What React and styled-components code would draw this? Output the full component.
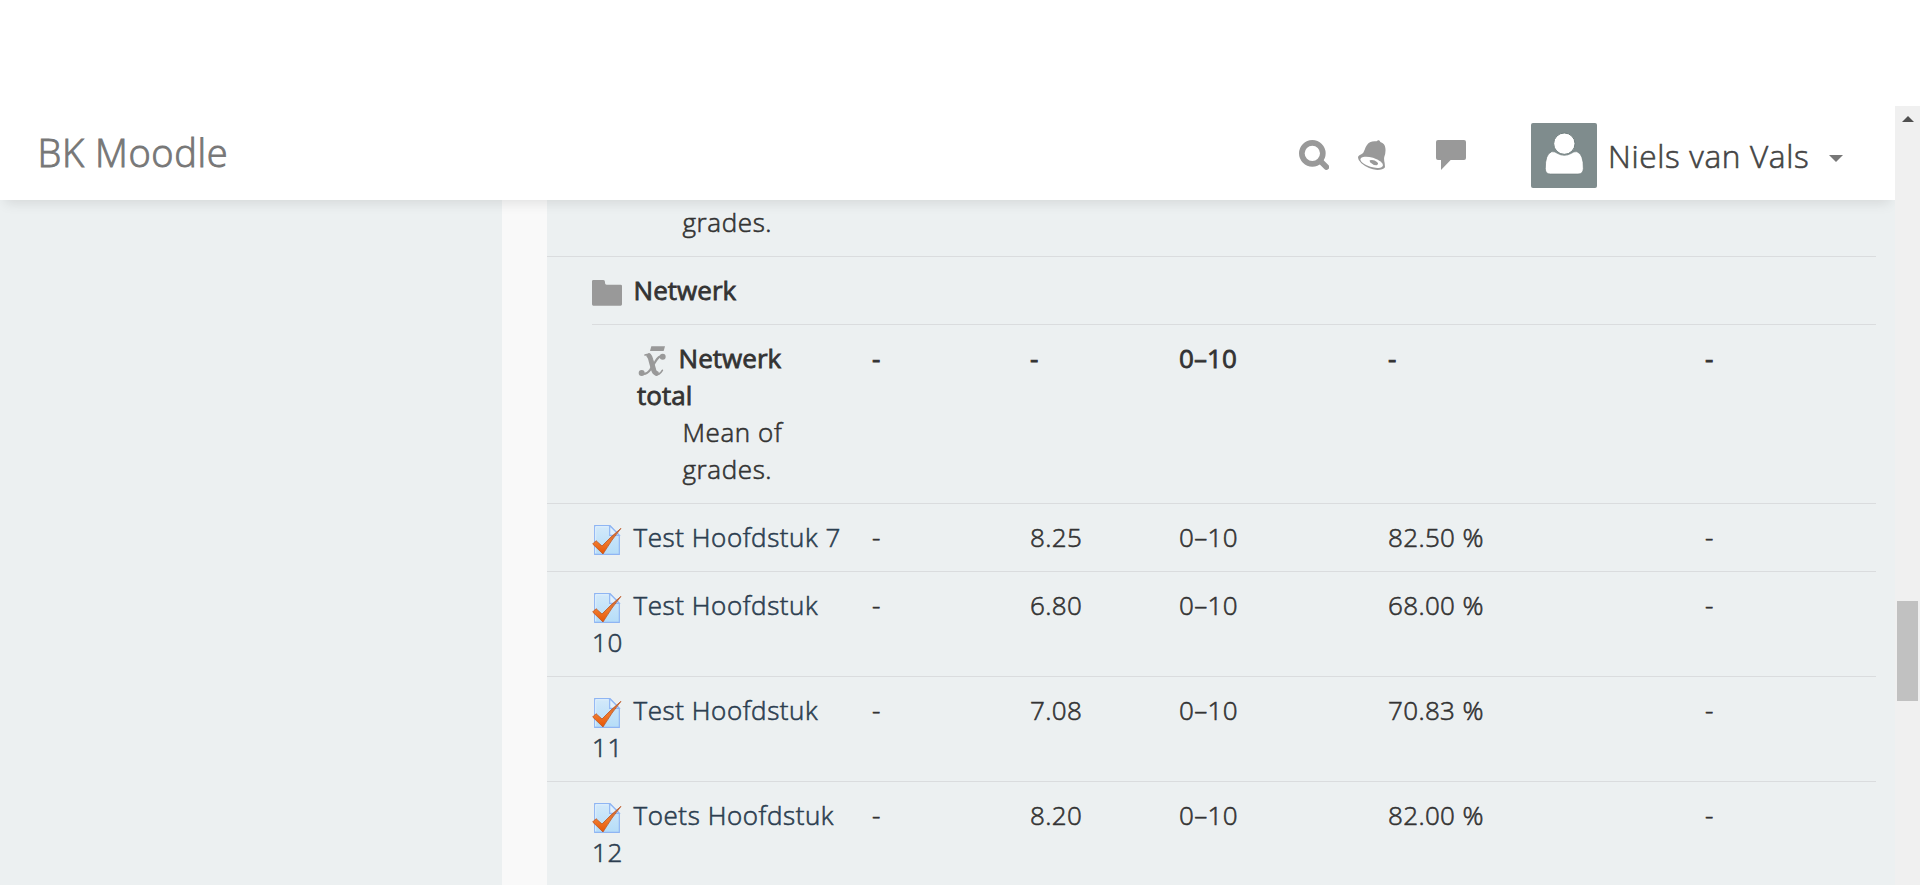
import React from 'react';
import styled, { createGlobalStyle } from 'styled-components';

const GlobalStyle = createGlobalStyle`
  *, *::before, *::after { box-sizing: border-box; }
  html, body { margin: 0; height: 885px; overflow: hidden; background: #fff; }
  body {
    font: 300 26px/37px "Open Sans", "Noto Sans", sans-serif;
    letter-spacing: 0.35px;
    color: #333;
    -webkit-text-stroke: 0.6px currentColor;
  }
`;

const Screen = styled.div`
  display: flex;
  width: 1920px;
  height: 885px;
  padding-top: 106px;
  overflow: hidden;
`;

const Page = styled.div`
  flex: 1;
  min-width: 0;
  display: flex;
  flex-direction: column;
  overflow: hidden;
`;

const Header = styled.header`
  flex: none;
  z-index: 1;
  display: flex;
  align-items: center;
  height: 94px;
  padding: 0 52px 0 37.5px;
  background: #fff;
  box-shadow: 0 8px 12px -5px rgba(0, 0, 0, 0.1);
`;

const Brand = styled.a`
  flex: 1;
  color: #777;
  font-size: 38px;
  letter-spacing: 0.6px;
  line-height: 52px;
  padding-bottom: 2px;
  -webkit-text-stroke: 0.9px currentColor;
`;

const HeaderIcons = styled.nav`
  display: flex;
  align-items: center;
  padding-top: 4px;
  color: #999;
  svg { display: block; height: 30px; fill: currentColor; }
`;

const IconLink = styled.a`
  margin-right: ${(p) => p.$gap}px;
`;

const UserMenu = styled.div`
  display: flex;
  align-items: center;
  width: 312px;
`;

const AvatarTile = styled.span`
  width: 66px;
  height: 65px;
  margin: 5px 11px 0 0;
  border-radius: 2px;
  background: #7f8c8d;
  svg { display: block; }
`;

const UserName = styled.span`
  color: #444;
  font-size: 31.6px;
  letter-spacing: 0.65px;
  line-height: 44px;
  padding-top: 6px;
  white-space: nowrap;
`;

const Caret = styled.span`
  margin: 11px 0 0 auto;
  border: 7px solid transparent;
  border-top-color: #777;
  border-bottom: 0;
`;

const Body = styled.div`
  flex: 1;
  min-height: 0;
  display: flex;
`;

const SideRegion = styled.aside`
  width: 502px;
  background: #ecf0f1;
`;

const Gutter = styled.div`
  width: 45px;
  background: #f9f9f9;
`;

const Report = styled.main`
  flex: 1;
  padding-right: 19px;
  background: #ecf0f1;
`;

const Row = styled.div`
  display: grid;
  grid-template-columns: ${(p) => 310 - (p.$nested ? 45 : 0)}px 158px 149px 209px 317px 1fr;
  margin-left: ${(p) => (p.$nested ? 45 : 0)}px;
  border-top: ${(p) => (p.$first ? 0 : 1)}px solid #dadcde;
  ${(p) => p.$first && 'margin-top: -11px;'}
  ${(p) => p.$strong && 'font-weight: 400; letter-spacing: 0.05px; -webkit-text-stroke: 0.8px currentColor;'}
`;

const Cell = styled.div`
  padding: 15px;
`;

const ItemCell = styled(Cell)`
  padding-left: 45px;
  > svg {
    width: 30px;
    height: 30px;
    margin-right: 11.5px;
    vertical-align: text-bottom;
  }
`;

const ItemLink = styled.a`
  color: #2c3e50;
  letter-spacing: 0.57px;
`;

const Note = styled.div`
  padding-left: 45.5px;
  font-weight: 300;
  letter-spacing: 0.6px;
  -webkit-text-stroke: 0.6px currentColor;
`;

const ScrollTrack = styled.div`
  width: 25px;
  padding: 10px 2px 0;
  background: #f0f0f0;
`;

const ScrollArrow = styled.div`
  width: 0;
  margin-left: 5px;
  border: 6px solid transparent;
  border-bottom-color: #505050;
  border-top: 0;
`;

const ScrollThumb = styled.div`
  width: 21px;
  height: 100px;
  margin-top: 479px;
  background: #c1c1c1;
`;

const SearchIcon = () => (
  <svg width="30" height="30" viewBox="0 0 90 90">
    <circle cx="40" cy="40" r="31.5" fill="none" stroke="currentColor" strokeWidth="17" />
    <path d="M67 66 L82 81" stroke="currentColor" strokeWidth="17" strokeLinecap="round" />
  </svg>
);

const BellIcon = () => (
  <svg width="28" height="30" viewBox="0 0 84 90">
    <path d="M60 1 Q65 -1 67 6 Q81 11 82 24 Q84 37 79 50 Q77 57 80 70 L81 82 Q75 90 58 90 Q31 88 10 70 Q-3 58 1 49 Q3 46 10 43 Q17 39 20 29 Q26 12 36 7 Q45 2 56 4 Z" />
    <ellipse cx="41" cy="67" rx="35" ry="14" fill="#fff" transform="rotate(17 41 67)" />
    <path d="M35 61 Q48 58 57 66 Q64 72 56 76 Q45 76 36 67 Z" />
  </svg>
);

const MessageIcon = () => (
  <svg width="30" height="30" viewBox="0 0 90 90">
    <path d="M6 0 H84 Q90 0 90 6 V54 Q90 60 84 60 H44 L15 90 V60 H6 Q0 60 0 54 V6 Q0 0 6 0 Z" />
  </svg>
);

const Avatar = () => (
  <svg width="66" height="65" viewBox="0 0 198 195">
    <path
      d="M62 86 Q72 85 79 91 Q100 103 121 91 Q128 85 138 86 Q158 94 157 137 Q156 153 141 153 H58 Q43 153 43 137 Q42 94 62 86 Z"
      fill="#fff" stroke="#6f7d7d" strokeWidth="2"
    />
    <circle cx="100" cy="62" r="32" fill="#fff" stroke="#6f7d7d" strokeWidth="3" />
  </svg>
);

const FolderIcon = () => (
  <svg viewBox="0 0 90 90">
    <path d="M4 6 H34 Q39 6 39 12 V15 Q39 20 44 20 H86 Q90 20 90 24 V79 Q90 83 86 83 H4 Q0 83 0 79 V10 Q0 6 4 6 Z" fill="#999" />
  </svg>
);

const MeanIcon = () => (
  <svg viewBox="0 0 90 90" fill="none" stroke="#999" strokeLinecap="round">
    <path d="M43 1 H84 L80 15 H39 Z" fill="#999" stroke="none" />
    <path d="M24 27 Q36 23 40 35 L51 75 Q55 90 66 84 Q72 80 76 73" strokeWidth="5" />
    <path d="M36 29 Q40 33 42 43 L50 72 Q52 80 58 82" strokeWidth="15" />
    <path d="M79 30 Q66 28 55 47 L40 71 Q27 89 12 82" strokeWidth="6.5" />
    <circle cx="77" cy="32" r="9" fill="#999" stroke="none" />
    <circle cx="14" cy="81" r="9" fill="#999" stroke="none" />
  </svg>
);

const QuizIcon = () => (
  <svg viewBox="0 0 90 90">
    <defs>
      <linearGradient id="quizPage" x1="0" y1="0" x2="0" y2="1">
        <stop offset="0" stopColor="#d3e9fa" />
        <stop offset="1" stopColor="#b5ddf8" />
      </linearGradient>
      <linearGradient id="quizTick" x1="0" y1="0" x2="0" y2="1">
        <stop offset="0" stopColor="#c96a35" />
        <stop offset="0.55" stopColor="#f0782a" />
        <stop offset="1" stopColor="#e65505" />
      </linearGradient>
    </defs>
    <path d="M8 2 H54 L82 31 V88 H8 Z" fill="url(#quizPage)" stroke="#8fb5f3" strokeWidth="3.5" />
    <path d="M11 85 V5 H50" fill="none" stroke="#e4f3fd" strokeWidth="2.5" />
    <path d="M53 2 V31 H82 Z" fill="#e2f1fc" stroke="#8fb5f3" strokeWidth="3.5" />
    <path d="M2 57 L12 47 L30 63 Q55 36 87 10 Q60 42 33 87 Z" fill="url(#quizTick)" stroke="#b94e1c" strokeWidth="2.2" strokeLinejoin="round" />
  </svg>
);

const quizzes = [
  { name: 'Test Hoofdstuk 7', grade: '8.25', percent: '82.50 %' },
  { name: 'Test Hoofdstuk 10', grade: '6.80', percent: '68.00 %' },
  { name: 'Test Hoofdstuk 11', grade: '7.08', percent: '70.83 %' },
  { name: 'Toets Hoofdstuk 12', grade: '8.20', percent: '82.00 %' },
];

const Grades = ({ grade, percent }) => (
  <>
    <Cell>-</Cell>
    <Cell>{grade}</Cell>
    <Cell>0–10</Cell>
    <Cell>{percent}</Cell>
    <Cell>-</Cell>
  </>
);

export default function App() {
  return (
    <>
      <GlobalStyle />
      <Screen>
        <Page>
          <Header>
            <Brand>BK Moodle</Brand>
            <HeaderIcons>
              <IconLink $gap={29}><SearchIcon /></IconLink>
              <IconLink $gap={50}><BellIcon /></IconLink>
              <IconLink $gap={65}><MessageIcon /></IconLink>
            </HeaderIcons>
            <UserMenu>
              <AvatarTile><Avatar /></AvatarTile>
              <UserName>Niels van Vals</UserName>
              <Caret />
            </UserMenu>
          </Header>
          <Body>
            <SideRegion />
            <Gutter />
            <Report>
              <Row $nested $first>
                <ItemCell><Note>grades.</Note></ItemCell>
              </Row>
              <Row $strong>
                <ItemCell><FolderIcon />Netwerk</ItemCell>
              </Row>
              <Row $nested $strong>
                <ItemCell>
                  <MeanIcon />Netwerk total
                  <Note>Mean of grades.</Note>
                </ItemCell>
                <Grades grade="-" percent="-" />
              </Row>
              {quizzes.map((q) => (
                <Row key={q.name}>
                  <ItemCell><QuizIcon /><ItemLink>{q.name}</ItemLink></ItemCell>
                  <Grades grade={q.grade} percent={q.percent} />
                </Row>
              ))}
            </Report>
          </Body>
        </Page>
        <ScrollTrack>
          <ScrollArrow />
          <ScrollThumb />
        </ScrollTrack>
      </Screen>
    </>
  );
}
